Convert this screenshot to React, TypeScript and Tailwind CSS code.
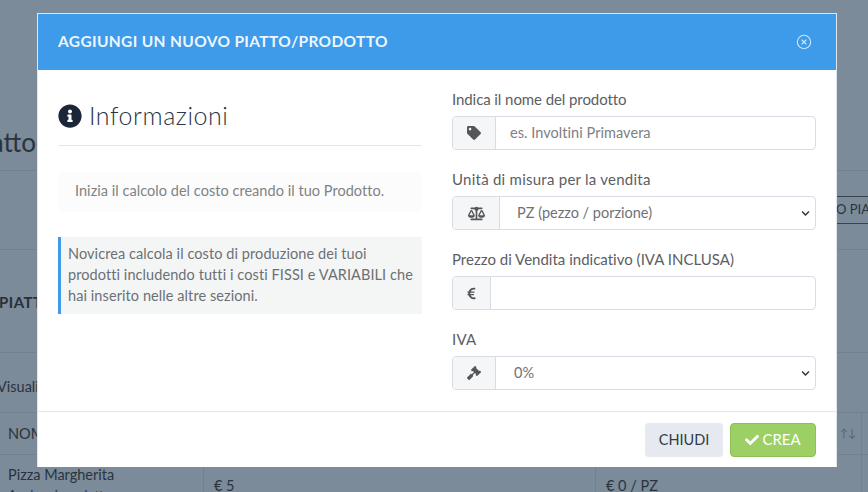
import { FaTag, FaBalanceScale, FaEuroSign, FaGavel, FaCheck, FaInfoCircle, FaChevronDown } from "react-icons/fa";
import { CircleX } from "lucide-react";
import type { ReactNode } from "react";

const font = { fontFamily: '"Lato", "Noto Sans", sans-serif' };

function Field({ label, icon, addon, track, children }: { label: string; icon: ReactNode; addon: string; track: string; children: ReactNode }) {
  return (
    <div className="flex flex-col h-[80px]">
      <div className={`h-[27px] text-[15px] leading-[21px] text-[#5b5e63] ${track}`}>{label}</div>
      <div className="flex h-[34px] rounded-[4px] border border-[#d8dce6] bg-white overflow-hidden">
        <div className={`flex items-center justify-center shrink-0 bg-[#f5f6f8] border-r border-[#d8dce6] text-[#54565a] ${addon}`}>{icon}</div>
        {children}
      </div>
    </div>
  );
}

function SelectBody({ text, pl }: { text: string; pl: string }) {
  return (
    <div className={`flex-1 flex items-center justify-between pr-[5px] text-[14.5px] text-[#6f7276] ${pl}`}>
      <span>{text}</span>
      <FaChevronDown className="text-[#333] text-[9px]" />
    </div>
  );
}

export default function App() {
  return (
    <div className="relative w-[868px] h-[492px] overflow-hidden bg-[#7b8b99] text-[#2c3540]" style={font}>
      {/* page behind the overlay */}
      <div className="flex flex-col">
        <div className="h-[171px] border-b border-[#71818e] flex items-end pb-[12px]">
          <span className="text-[26px] leading-[32px] text-[#2b333d] ml-[-31px]">Piatto</span>
        </div>
        <div className="h-[79px] border-b border-[#71818e] flex items-center justify-end">
          <div className="h-[28px] w-[33px] border-y border-l border-[#39434d] overflow-hidden flex items-center text-[13px] text-[#2b333d] whitespace-nowrap">O PIATTO</div>
        </div>
        <div className="h-[103px] border-b border-[#71818e] flex items-center pt-[2px]">
          <span className="text-[15px] font-bold text-[#27303a] ml-[-1px] tracking-[0.5px]">PIATTI</span>
        </div>
        <div className="h-[60px] border-b border-[#71818e] flex items-center pt-[8px]">
          <span className="text-[14.5px] text-[#2b333d] ml-[-3px]">Visualizza</span>
        </div>
        <div className="h-[42px] border-b border-[#71818e] flex items-center pl-[8px] pr-[8px] justify-between relative">
          <span className="text-[14.5px] text-[#2b333d]">NOME</span>
          <span className="text-[11px] text-[#55636f] mr-[4px]">↑↓</span>
          <div className="absolute right-[6px] top-0 bottom-0 border-r border-[#71818e]" />
        </div>
        <div className="flex h-[40px]">
          <div className="w-[204px] border-r border-[#71818e] pl-[8px] pt-[10px] text-[14.5px] leading-[20px] text-[#2b333d] whitespace-nowrap">
            Pizza Margherita
            <div className="text-[13px] text-[#2b333d]">Aggiungi prodotto</div>
          </div>
          <div className="w-[392px] border-r border-[#71818e] pl-[10px] pt-[20px] text-[14.5px] text-[#2b333d]">€ 5</div>
          <div className="w-[266px] border-r border-[#71818e] pl-[10px] pt-[20px] text-[14.5px] text-[#2b333d]">€ 0 / PZ</div>
        </div>
      </div>

      {/* modal */}
      <div className="absolute left-[37px] top-[13px] w-[800px] h-[454px] flex flex-col bg-white border-t border-x border-[#dfe6ec]">
        <div className="h-[56px] shrink-0 bg-[#3d9be9] flex items-center justify-between pl-[20px] pr-[24px]">
          <span className="text-[15.5px] font-bold text-[#eef6fd] tracking-[0.35px]">AGGIUNGI UN NUOVO PIATTO/PRODOTTO</span>
          <CircleX className="text-[#cfe6f9] w-[16px] h-[16px]" strokeWidth={1.6} />
        </div>
        <div className="flex-1 flex pl-[20px] pr-[20px]">
          <div className="w-[364px] pt-[31px]">
            <div className="flex items-center gap-[7px] h-[30px] text-[25px] text-[#2a3442] font-light tracking-[0.55px]">
              <FaInfoCircle className="text-[#1b2638] text-[24px] shrink-0" />
              <span>Informazioni</span>
            </div>
            <div className="mt-[14px] border-t border-[#e4e7ea]" />
            <div className="mt-[26px] h-[40px] rounded-[4px] bg-[#fcfcfc] pl-[17px] pb-[3px] flex items-center text-[14.5px] text-[#808284] tracking-[0.04px]">
              Inizia il calcolo del costo creando il tuo Prodotto.
            </div>
            <div className="mt-[25px] border-l-[3px] border-[#3d9be9] bg-[#f4f6f6] pl-[7px] pt-[6px] h-[77px] text-[14.5px] leading-[21px] text-[#6c7074] tracking-[0.08px]">
              Novicrea calcola il costo di produzione dei tuoi prodotti includendo tutti i costi FISSI e VARIABILI che hai inserito nelle altre sezioni.
            </div>
          </div>
          <div className="w-[364px] ml-[30px] pt-[19px] flex flex-col">
            <Field label="Indica il nome del prodotto" track="tracking-[-0.08px]" icon={<FaTag className="text-[14px]" />} addon="w-[43px]">
              <div className="flex-1 flex items-center pl-[14px] text-[14.5px] text-[#7d8083] tracking-[0.05px]">es. Involtini Primavera</div>
            </Field>
            <Field label="Unità di misura per la vendita" track="tracking-[0.25px]" icon={<FaBalanceScale className="text-[17px]" />} addon="w-[47px]">
              <SelectBody text="PZ (pezzo / porzione)" pl="pl-[17px]" />
            </Field>
            <Field label="Prezzo di Vendita indicativo (IVA INCLUSA)" track="tracking-[0.01px]" icon={<FaEuroSign className="text-[13px]" />} addon="w-[38px]">
              <div className="flex-1" />
            </Field>
            <Field label="IVA" track="tracking-[0.25px]" icon={<FaGavel className="text-[14px]" />} addon="w-[43px]">
              <SelectBody text="0%" pl="pl-[18px]" />
            </Field>
          </div>
        </div>
        <div className="h-[56px] shrink-0 border-t border-[#e4e7ea] flex items-center justify-end gap-[7px] pr-[20px]">
          <div className="h-[34px] w-[78px] rounded-[4px] bg-[#e6e9ef] flex items-center justify-center text-[14.5px] text-[#333b45]">CHIUDI</div>
          <div className="h-[34px] w-[86px] rounded-[4px] bg-[#9ccf64] border border-[#8dc153] flex items-center justify-center gap-[3px] text-[15px] text-white">
            <FaCheck className="text-[14px]" />
            <span>CREA</span>
          </div>
        </div>
      </div>
    </div>
  );
}
